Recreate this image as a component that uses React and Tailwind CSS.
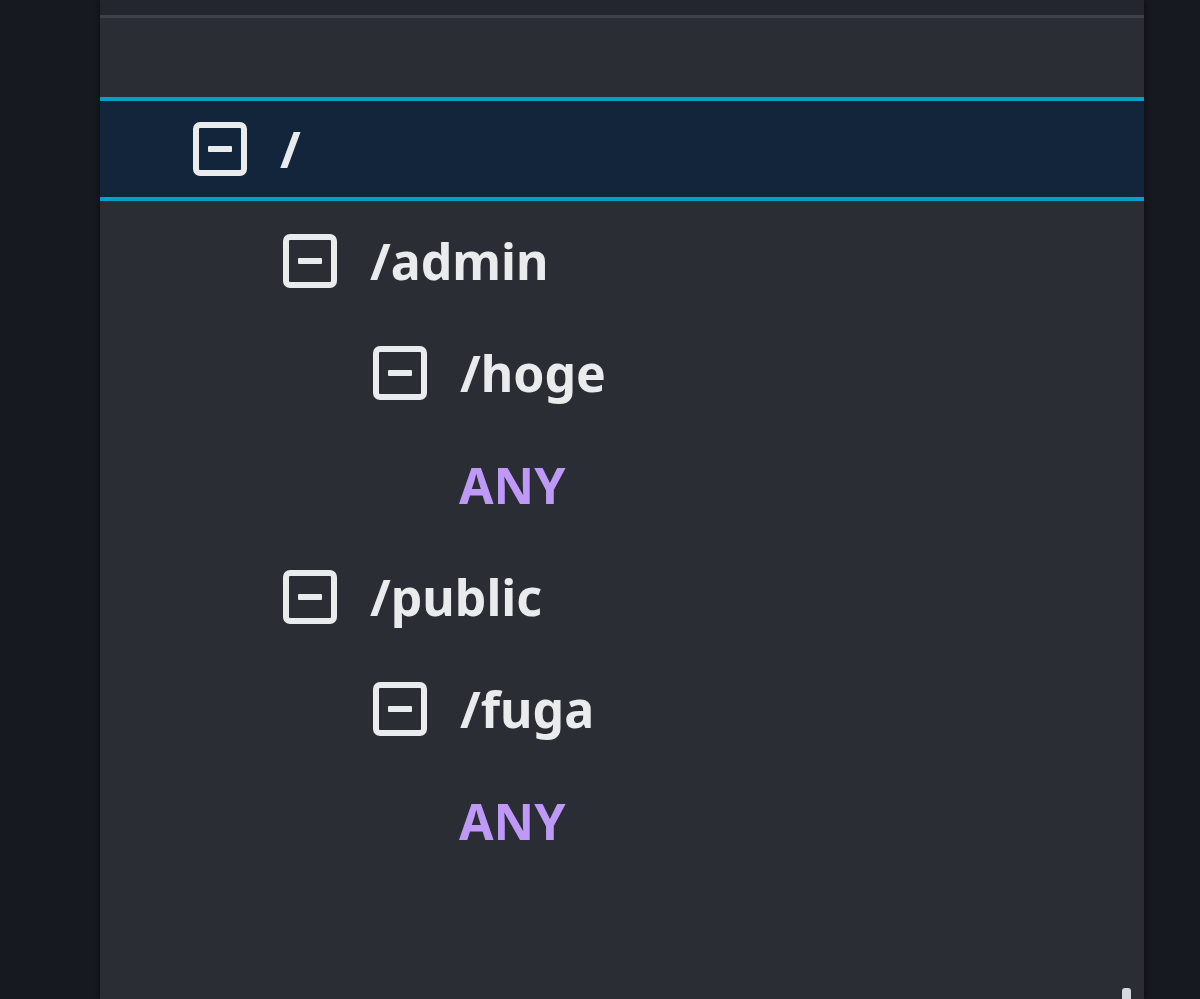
import React from "react";

function MinusBox() {
  return (
    <svg width="54" height="54" viewBox="0 0 54 54" className="shrink-0">
      <rect x="3" y="3" width="48" height="48" rx="4" fill="none" stroke="#e9ebed" strokeWidth="6" />
      <rect x="15" y="24" width="24" height="6" rx="1" fill="#e9ebed" />
    </svg>
  );
}

const rows = [
  { label: "/", level: 0, icon: true, selected: true },
  { label: "/admin", level: 1, icon: true },
  { label: "/hoge", level: 2, icon: true },
  { label: "ANY", level: 3, icon: false, method: true },
  { label: "/public", level: 1, icon: true },
  { label: "/fuga", level: 2, icon: true },
  { label: "ANY", level: 3, icon: false, method: true },
];

const pads = ["pl-[93px]", "pl-[183px]", "pl-[273px]", "pl-[359px]"];

export default function App() {
  return (
    <div
      className="flex h-[999px] w-[1200px] overflow-hidden bg-[#16191f]"
      style={{ fontFamily: '"Noto Sans", "Open Sans", sans-serif' }}
    >
      <div className="w-[100px] shrink-0" />
      <div className="relative flex w-[1044px] shrink-0 flex-col bg-[#2a2d33] shadow-[0_0_6px_rgba(0,0,0,0.6)]">
        <div className="h-[15px] bg-[#23262c]" />
        <div className="h-[3px] bg-[#3d4149]" />
        <div className="h-[75px]" />
        <div className="flex flex-col">
          {rows.map((r, i) => (
            <div
              key={i}
              className={
                r.selected
                  ? "my-[4px] flex h-[104px] items-center border-y-4 border-[#00a1c9] bg-[#12253a]"
                  : "flex h-[112px] items-center"
              }
            >
              <div className={`flex items-center gap-[33px] ${pads[r.level]}`}>
                {r.icon && <MinusBox />}
                <span
                  className={
                    r.method
                      ? "text-[50px] font-bold leading-none text-[#bf99f7]"
                      : "text-[50px] font-bold leading-none text-[#e9ebed]"
                  }
                >
                  {r.label}
                </span>
              </div>
            </div>
          ))}
        </div>
        <div className="absolute bottom-0 left-[1022px] h-[11px] w-[9px] rounded-t-[3px] bg-[#d5d8dc]" />
      </div>
      <div className="flex-1" />
    </div>
  );
}
